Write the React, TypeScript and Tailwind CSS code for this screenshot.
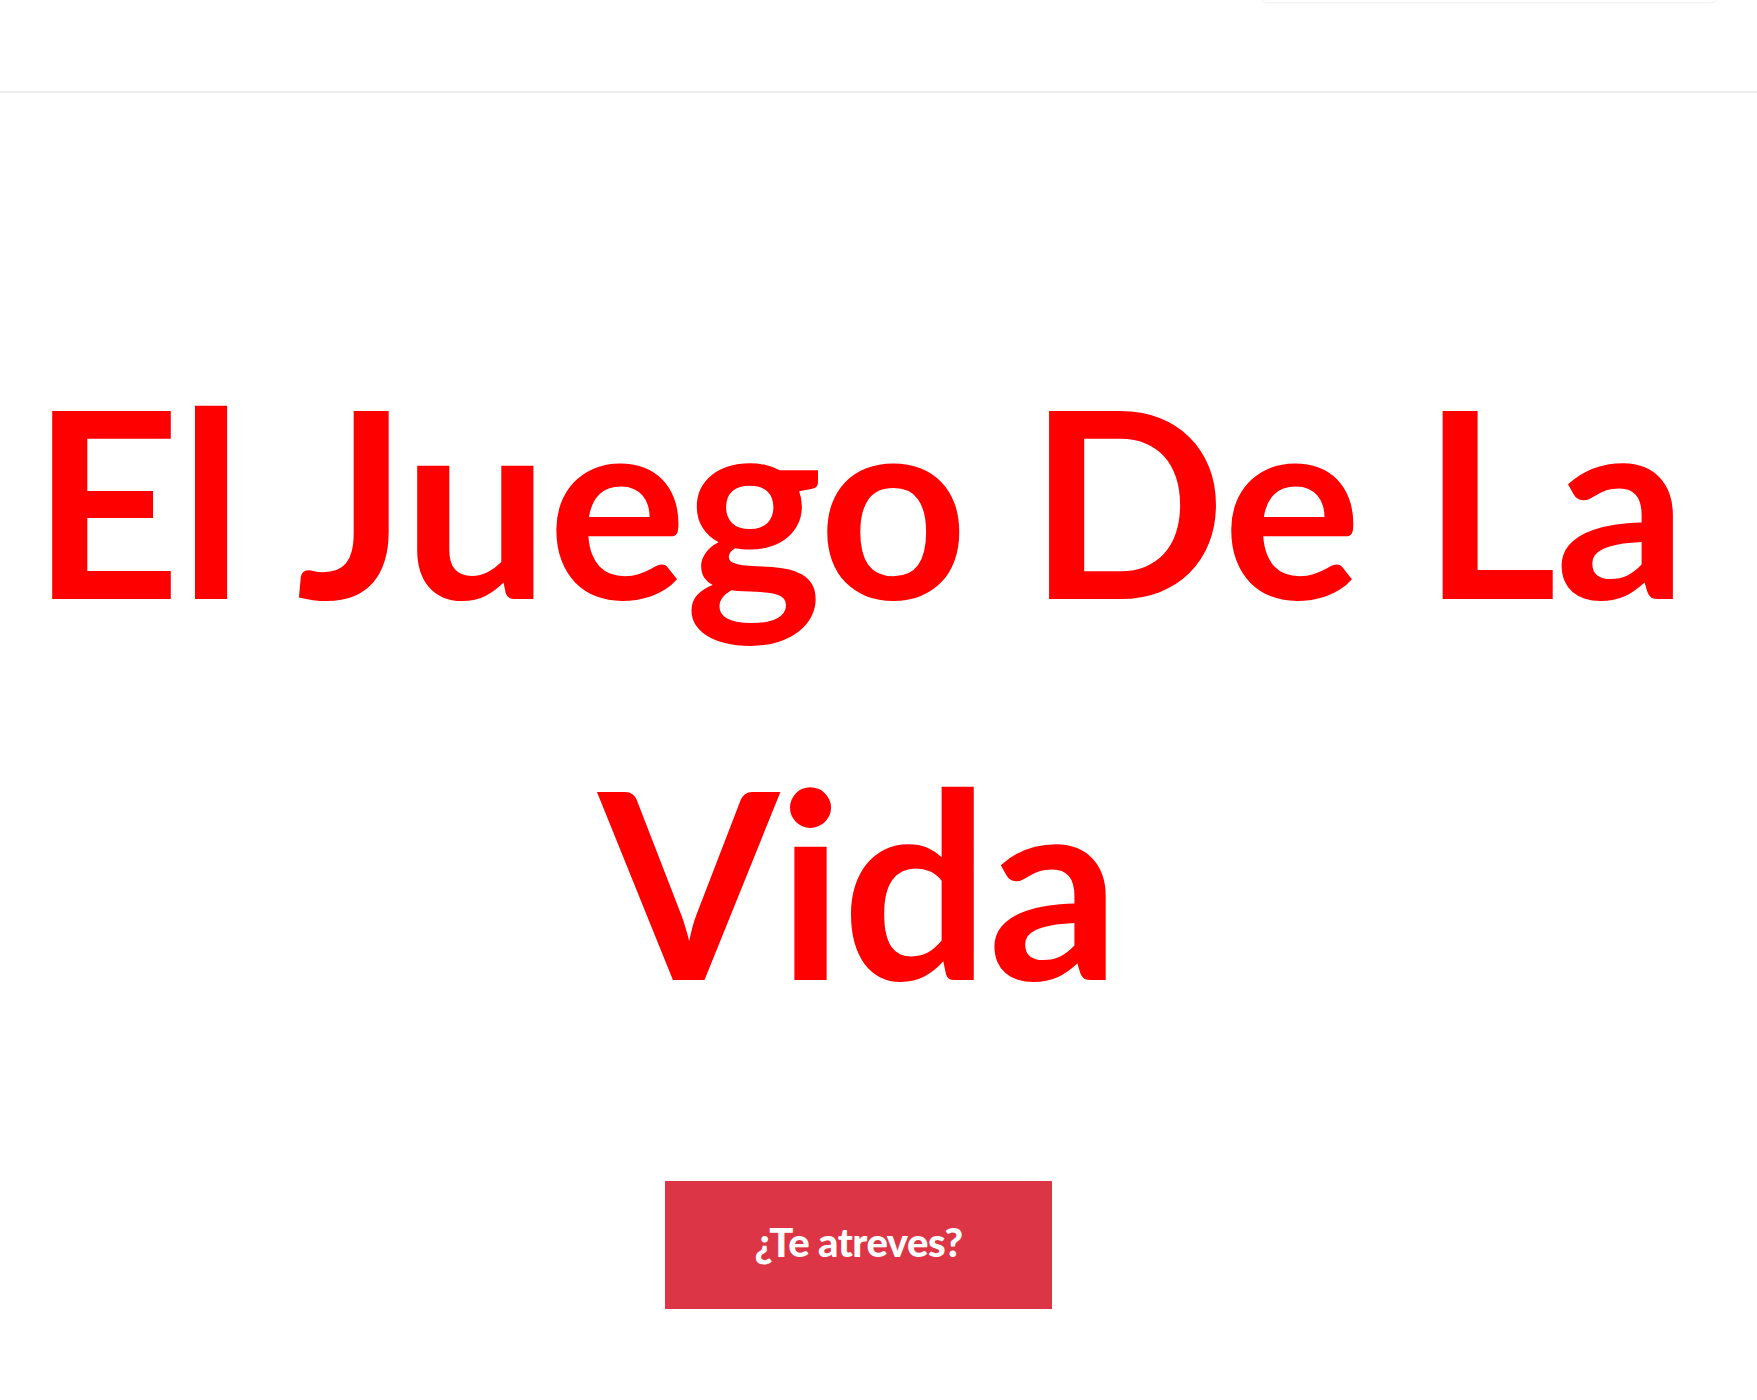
export default function App() {
  return (
    <div className="min-h-[1400px] bg-white" style={{ fontFamily: "Lato, 'Noto Sans', sans-serif" }}>
      <header className="relative h-[93px] border-b-2 border-[#ececec] bg-white">
        <div className="absolute left-[1261px] top-[-20px] h-[22px] w-[456px] rounded-md shadow-[0_1px_2px_rgba(0,0,0,0.06)]" />
      </header>
      <main className="flex flex-col items-center pr-[40px] pt-[215px]">
        <h1 className="text-center text-[260px] font-bold leading-[381px] tracking-[-1.5px] text-[#ff0000]">
          El Juego De La
          <br />
          Vida
        </h1>
        <button className="mt-[111px] flex h-[128px] w-[387px] items-center justify-center bg-[#dc3545] pb-[6px] text-[40px] font-black tracking-[-0.5px] text-white">
          ¿Te atreves?
        </button>
      </main>
    </div>
  );
}
